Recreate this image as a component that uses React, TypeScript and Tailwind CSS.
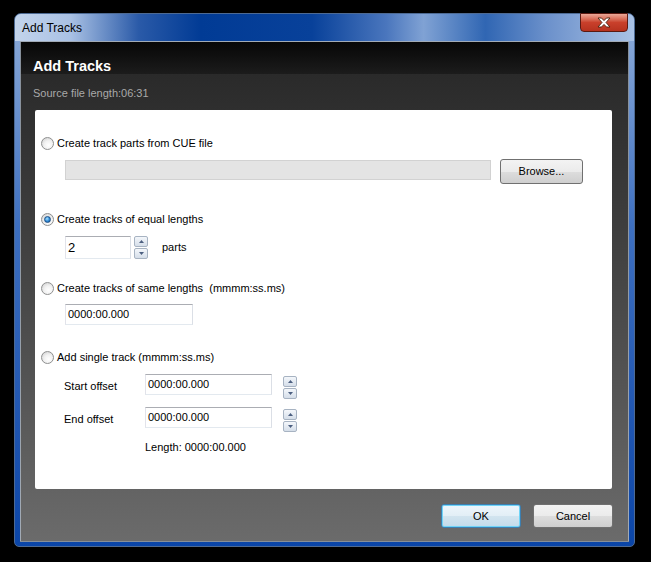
import React from 'react'

const font = { fontFamily: '"Liberation Sans", Arial, sans-serif' }

function Radio({ checked }: { checked?: boolean }) {
  return (
    <span className="flex h-[13px] w-[13px] shrink-0 items-center justify-center rounded-full border border-[#8e8f8f] bg-[radial-gradient(circle_at_60%_65%,#ffffff_0%,#f1f1f1_45%,#c9c9c9_100%)]">
      {checked && (
        <span className="h-[7px] w-[7px] rounded-full border border-[#1b4f86] bg-[radial-gradient(circle_at_40%_35%,#a8e2ff_0%,#2f8ad6_55%,#114a8c_100%)]" />
      )}
    </span>
  )
}

function Spinner() {
  const half =
    'flex h-[11px] w-[14px] items-center justify-center rounded-[2px] border border-[#a7b3c2] bg-gradient-to-b from-[#f4f7fb] to-[#d5dee9]'
  return (
    <div className="flex flex-col gap-[1px]">
      <div className={half}>
        <svg width="5" height="3" viewBox="0 0 5 3">
          <path d="M0 3 L2.5 0 L5 3 Z" fill="#4c5f80" />
        </svg>
      </div>
      <div className={half}>
        <svg width="5" height="3" viewBox="0 0 5 3">
          <path d="M0 0 L5 0 L2.5 3 Z" fill="#4c5f80" />
        </svg>
      </div>
    </div>
  )
}

function TextBox({ value, className }: { value: string; className: string }) {
  return (
    <div
      className={`flex items-center border border-[#abadb3] border-l-[#e2e3ea] border-r-[#dbdfe6] border-b-[#e3e9ef] bg-white pl-[2px] text-[11px] text-black ${className}`}
    >
      {value}
    </div>
  )
}

function Row({ checked, label }: { checked?: boolean; label: string }) {
  return (
    <div className="flex h-[14px] items-center gap-[3px] text-[11px] text-black">
      <Radio checked={checked} />
      <span className="whitespace-pre">{label}</span>
    </div>
  )
}

export default function App() {
  return (
    <div className="h-[562px] w-[651px] bg-black pl-[14px] pt-[13px]" style={font}>
      <div className="relative flex h-[534px] w-[621px] flex-col rounded-t-[7px] rounded-b-[5px] border border-[#4d6a93] bg-gradient-to-b from-[#8fadd9] via-[#3d6fc0] via-40% to-[#0a45a7]">
        {/* title bar */}
        <div className="flex h-[27px] items-center rounded-t-[6px] bg-[linear-gradient(to_right,#c3d4ec_0%,#a9c1e4_9%,#2a5aa8_20%,#013b95_30%,#08419a_48%,#4a76bd_60%,#80a2d4_66%,#3066b3_76%,#6c91cb_86%,#a9c2e5_100%)] pl-[7px]">
          <span className="text-[12px] text-black">Add Tracks</span>
        </div>
        <div className="absolute right-[6px] top-[-1px] flex h-[19px] w-[48px] items-center justify-center rounded-b-[4px] border border-[#5b1a12] bg-gradient-to-b from-[#e9a797] via-[#c9402b] via-50% to-[#b6321f]">
          <svg width="14" height="11" viewBox="0 0 14 11">
            <path
              d="M1 1 L4.5 1 L7 3.6 L9.5 1 L13 1 L9 5.5 L13 10 L9.5 10 L7 7.4 L4.5 10 L1 10 L5 5.5 Z"
              fill="#ffffff"
              stroke="#47210f"
              strokeWidth="0.9"
              strokeLinejoin="round"
            />
          </svg>
        </div>

        {/* client area */}
        <div className="mx-[5px] mb-[4px] flex flex-1 flex-col border border-[#c7d5e8]/60 bg-gradient-to-b from-[#262626] to-[#6b6b6b]">
          <div className="h-[32px] bg-gradient-to-b from-[#070707] to-[#1c1c1c] pl-[12px] pt-[16px]">
            <div className="text-[14.5px] font-bold leading-[17px] text-white">Add Tracks</div>
          </div>
          <div className="mt-[12px] h-[14px] pl-[12px] text-[11px] leading-[14px] text-[#a9a9a9]">
            Source file length:06:31
          </div>

          {/* white panel */}
          <div className="ml-[14px] mt-[10px] flex h-[379px] w-[577px] flex-col rounded-[2px] bg-white pl-[6px] pt-[26px] text-[11px]">
            <Row label="Create track parts from CUE file" />
            <div className="ml-[24px] mt-[9px] flex items-start">
              <div className="mt-[1px] h-[20px] w-[426px] border border-[#d2d2d2] bg-[#e4e4e4]" />
              <div className="ml-[9px] flex h-[25px] w-[83px] items-center justify-center rounded-[3px] border border-[#707070] bg-[linear-gradient(to_bottom,#f3f3f3_0%,#ebebeb_50%,#dddddd_51%,#cfcfcf_100%)] text-[11px] text-black">
                Browse...
              </div>
            </div>

            <div className="mt-[28px]">
              <Row checked label="Create tracks of equal lengths" />
            </div>
            <div className="ml-[24px] mt-[10px] flex items-center">
              <TextBox value="2" className="h-[23px] w-[66px] !text-[13px]" />
              <div className="ml-[3px]">
                <Spinner />
              </div>
              <span className="ml-[14px] text-[11px] text-black">parts</span>
            </div>

            <div className="mt-[22px]">
              <Row label="Create tracks of same lengths  (mmmm:ss.ms)" />
            </div>
            <div className="ml-[24px] mt-[9px] flex">
              <TextBox value="0000:00.000" className="h-[21px] w-[128px]" />
            </div>

            <div className="mt-[25px]">
              <Row label="Add single track (mmmm:ss.ms)" />
            </div>
            <div className="ml-[23px] mt-[10px] flex items-start">
              <span className="mt-[4px] w-[81px] text-[11px] text-black">Start offset</span>
              <TextBox value="0000:00.000" className="h-[21px] w-[127px]" />
              <div className="ml-[11px] mt-[2px]">
                <Spinner />
              </div>
            </div>
            <div className="ml-[23px] mt-[8px] flex items-start">
              <span className="mt-[4px] w-[81px] text-[11px] text-black">End offset</span>
              <TextBox value="0000:00.000" className="h-[21px] w-[127px]" />
              <div className="ml-[11px] mt-[2px]">
                <Spinner />
              </div>
            </div>
            <div className="ml-[104px] mt-[8px] h-[14px] text-[11px] leading-[14px] text-black">
              Length: 0000:00.000
            </div>
          </div>

          {/* buttons */}
          <div className="mr-[15px] mt-[15px] flex justify-end gap-[12px]">
            <div className="flex h-[24px] w-[80px] items-center justify-center rounded-[3px] border border-[#3c7fb1] bg-[linear-gradient(to_bottom,#eef6fb_0%,#e2eef6_50%,#d2e4ef_51%,#c3dbea_100%)] text-[11px] text-black shadow-[0_0_0_1px_#6fd4f7_inset]">
              OK
            </div>
            <div className="flex h-[24px] w-[80px] items-center justify-center rounded-[3px] border border-[#707070] bg-[linear-gradient(to_bottom,#f3f3f3_0%,#ebebeb_50%,#dddddd_51%,#cfcfcf_100%)] text-[11px] text-black">
              Cancel
            </div>
          </div>
        </div>
      </div>
    </div>
  )
}
